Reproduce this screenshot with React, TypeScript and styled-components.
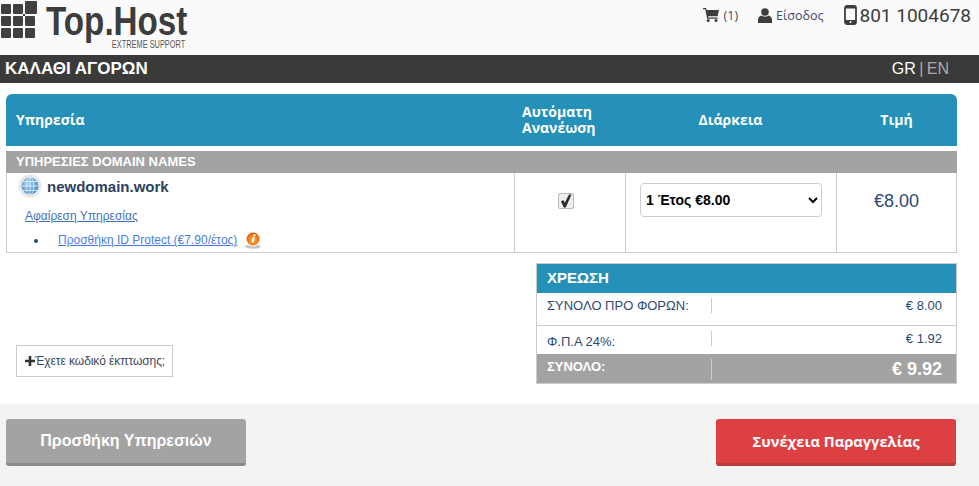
import React from "react";
import styled, { createGlobalStyle } from "styled-components";

const GlobalStyle = createGlobalStyle`
  html, body { margin: 0; padding: 0; background: #fff; }
  body { font-family: "Liberation Sans", Arial, sans-serif; color: #2c4a6b; }
  * { box-sizing: border-box; }
`;

const Page = styled.div`
  width: 979px;
  height: 486px;
  overflow: hidden;
  display: flex;
  flex-direction: column;
`;

const TopBar = styled.header`
  height: 55px;
  background: #fafafa;
  display: flex;
  justify-content: space-between;
  padding-right: 8px;
`;

const Logo = styled.div`
  display: flex;
  align-items: flex-start;
  gap: 8px;
  padding-top: 1px;
`;

const LogoText = styled.div`
  width: 139px;
  display: flex;
  flex-direction: column;
  align-items: flex-end;
  color: #3d3d3d;
`;

const LogoName = styled.span`
  align-self: flex-start;
  font-size: 40px;
  font-weight: 700;
  line-height: 40px;
  white-space: nowrap;
  transform: scaleX(0.83);
  transform-origin: left center;
`;

const LogoTag = styled.span`
  font-size: 10px;
  line-height: 8px;
  white-space: nowrap;
  color: #555;
  transform: scaleX(0.74);
  transform-origin: right center;
`;

const TopLinks = styled.div`
  display: flex;
  align-items: flex-start;
  padding-top: 5px;
`;

const TopLink = styled.span<{ $gap: number }>`
  display: flex;
  align-items: center;
  gap: ${(p) => p.$gap}px;
  height: 20px;
  margin-right: 20px;
  font-family: "Open Sans", sans-serif;
  font-size: 12.5px;
  color: #3d4a63;
`;

const Phone = styled.span`
  display: flex;
  align-items: center;
  gap: 3px;
  height: 20px;
  font-family: Roboto, sans-serif;
  font-size: 19px;
  color: #3d3d3d;
`;

const TitleBar = styled.div`
  height: 28px;
  background: #3a3a3a;
  display: flex;
  align-items: center;
  justify-content: space-between;
  padding: 0 30px 0 5px;
  color: #fff;
`;

const Title = styled.h1`
  margin: 0;
  font-size: 17px;
  font-weight: 700;
`;

const Langs = styled.div`
  font-size: 16px;
  word-spacing: -1px;
  color: #fff;
  span { color: #aaa; }
`;

const Content = styled.main`
  flex: 1;
  background: #fff;
  padding: 11px 22px 0 6px;
  display: flex;
  flex-direction: column;
`;

const HeadRow = styled.div`
  height: 52px;
  display: grid;
  grid-template-columns: 508px 111px 211px 121px;
  background: #2591b9;
  border-radius: 6px 6px 0 0;
  color: #fff;
  font-family: "Open Sans", sans-serif;
  font-size: 14px;
  font-weight: 700;
  line-height: 16px;
`;

const HeadCell = styled.div<{ $inset?: number }>`
  display: flex;
  align-items: center;
  justify-content: ${(p) => (p.$inset ? "flex-start" : "center")};
  padding-left: ${(p) => p.$inset ?? 0}px;
`;

const SectionRow = styled.div`
  height: 22px;
  margin-top: 5px;
  background: #a3a3a3;
  color: #fff;
  font-size: 13px;
  font-weight: 700;
  line-height: 21px;
  padding-left: 10px;
`;

const BodyRow = styled.div`
  height: 80px;
  display: grid;
  grid-template-columns: 507px 111px 211px 120px;
  border: 1px solid #ccc;
  border-top: 0;
  margin-bottom: 10px;
`;

const Cell = styled.div`
  border-left: 1px solid #ccc;
  display: flex;
  justify-content: center;
`;

const ServiceCell = styled.div`
  padding: 1px 0 0 11px;
`;

const DomainLine = styled.div`
  display: flex;
  align-items: center;
  gap: 5px;
  font-size: 15px;
  font-weight: 700;
  color: #2d3f5e;
`;

const RemoveLink = styled.a`
  display: block;
  margin: 11px 0 0 7px;
  font-size: 12px;
  line-height: 14px;
  color: #3f74b8;
  text-decoration: underline;
`;

const AddonList = styled.ul`
  margin: 8px 0 0;
  padding: 0 0 0 30px;
  font-size: 12px;
  line-height: 14px;
  color: #2d4a73;
`;

const AddonItem = styled.li`
  padding-left: 10px;
`;

const AddonInner = styled.span`
  display: inline-flex;
  align-items: center;
  gap: 7px;
`;

const AddonLink = styled.a`
  color: #4a7ee0;
  text-decoration: underline;
`;

const CheckBox = styled.span`
  width: 16px;
  height: 16px;
  margin: 20px 8px 0 0;
  border: 1px solid #bbb;
  border-radius: 2px;
  background: #eee;
  display: flex;
  align-items: center;
  justify-content: center;
`;

const DurationSelect = styled.select`
  width: 182px;
  height: 34px;
  margin-top: 10px;
  padding: 0 1px;
  border: 1px solid #ccc;
  border-radius: 4px;
  background: #fff;
  color: #000;
  font-family: "Liberation Sans", sans-serif;
  font-size: 14px;
  font-weight: 700;
`;

const Price = styled.div`
  margin-top: 18px;
  font-size: 18px;
  line-height: 20px;
  color: #2d4a73;
`;

const Lower = styled.div`
  display: flex;
  justify-content: space-between;
  align-items: flex-start;
`;

const CouponButton = styled.button`
  display: flex;
  align-items: center;
  width: 157px;
  height: 32px;
  margin: 82px 0 0 10px;
  padding: 0 0 0 8px;
  border: 1px solid #ccc;
  background: #fff;
  font-family: "Liberation Sans", sans-serif;
  font-size: 12px;
  letter-spacing: -0.07px;
  color: #3a4658;
  white-space: nowrap;
`;

const Summary = styled.section`
  width: 421px;
  height: 121px;
  border: 1px solid #ccc;
  display: flex;
  flex-direction: column;
`;

const SummaryTitle = styled.div`
  height: 29px;
  background: #2591b9;
  color: #fff;
  font-size: 15px;
  font-weight: 700;
  line-height: 28px;
  padding-left: 10px;
`;

const SummaryRow = styled.div<{ $total?: boolean; $h: number; $last?: boolean }>`
  height: ${(p) => p.$h}px;
  display: grid;
  grid-template-columns: 174px 1fr;
  padding-top: 5px;
  background: ${(p) => (p.$total ? "#a3a3a3" : "#fff")};
  color: ${(p) => (p.$total ? "#fff" : "#2d4a73")};
  border-bottom: ${(p) => (p.$last ? "0" : "1px solid #ccc")};
`;

const SummaryLabel = styled.div<{ $total?: boolean; $shift?: number }>`
  padding: ${(p) => p.$shift ?? 0}px 0 0 10px;
  font-size: 13px;
  font-weight: ${(p) => (p.$total ? 700 : 400)};
  line-height: 15px;
`;

const SummaryValue = styled.div<{ $total?: boolean }>`
  height: ${(p) => (p.$total ? "21px" : "15px")};
  border-left: 1px solid #ccc;
  text-align: right;
  padding-right: 14px;
  font-size: ${(p) => (p.$total ? "18px" : "13px")};
  font-weight: ${(p) => (p.$total ? 700 : 400)};
  line-height: ${(p) => (p.$total ? "21px" : "15px")};
`;

const Footer = styled.footer`
  height: 82px;
  background: #f3f3f3;
  display: flex;
  justify-content: space-between;
  padding: 15px 23px 0 6px;
`;

const ActionButton = styled.button<{ $red?: boolean }>`
  width: 240px;
  height: 47px;
  border: 0;
  border-bottom: 3px solid ${(p) => (p.$red ? "#b93a3c" : "#8a8a8a")};
  border-radius: 3px;
  background: ${(p) => (p.$red ? "#dc4043" : "#a3a3a3")};
  color: #fff;
  font-family: ${(p) => (p.$red ? '"Open Sans"' : '"Liberation Sans"')}, sans-serif;
  font-size: ${(p) => (p.$red ? "14.7px" : "16px")};
  font-weight: 700;
`;

const LogoMark = () => (
  <svg width="38" height="38" viewBox="0 0 38 38" fill="#404040">
    <rect x="1" y="3" width="10" height="10" rx="1" />
    <rect x="13" y="3" width="10" height="10" rx="1" />
    <rect x="25" y="0" width="12" height="13" rx="1" />
    <rect x="1" y="15" width="10" height="10" rx="1" />
    <rect x="13" y="15" width="10" height="10" rx="1" />
    <rect x="25" y="15" width="10" height="10" rx="1" />
    <rect x="1" y="27" width="10" height="10" rx="1" />
    <rect x="13" y="27" width="10" height="10" rx="1" />
    <rect x="25" y="27" width="10" height="10" rx="1" />
    <rect x="23" y="13" width="2" height="2" />
  </svg>
);

const CartIcon = () => (
  <svg width="16" height="14" viewBox="0 0 16 14" fill="#3d3d3d">
    <path d="M0 0h3l.5 2H16l-1.4 6.2H5l.3 1.3h9.3v1.200H4.200L2.200 1.200H0z" />
    <circle cx="5.2" cy="12.5" r="1.5" />
    <circle cx="13" cy="12.5" r="1.5" />
  </svg>
);

const UserIcon = () => (
  <svg width="14" height="15" viewBox="0 0 14 15" fill="#3d3d3d">
    <circle cx="7" cy="4" r="3.8" />
    <path d="M0 15v-3.2C0 9.2 2 7.8 3.6 7.4c1 .8 2.1 1.2 3.4 1.2s2.4-.4 3.4-1.2C12 7.8 14 9.2 14 11.8V15z" />
  </svg>
);

const PhoneIcon = () => (
  <svg width="13" height="20" viewBox="0 0 13 20" fill="none">
    <rect x="1" y="1" width="11" height="18" rx="2" stroke="#3d3d3d" strokeWidth="1.8" />
    <rect x="1" y="15" width="11" height="4" rx="1" fill="#3d3d3d" />
    <rect x="1" y="1" width="11" height="2.5" fill="#3d3d3d" />
    <circle cx="6.5" cy="17" r="1" fill="#fff" />
  </svg>
);

const GlobeIcon = () => (
  <svg width="24" height="24" viewBox="0 0 24 24" fill="none">
    <defs>
      <radialGradient id="globeFill" cx="0.4" cy="0.35" r="0.7">
        <stop offset="0" stopColor="#a8d0ee" />
        <stop offset="1" stopColor="#3f86c4" />
      </radialGradient>
    </defs>
    <circle cx="12" cy="12" r="11.5" fill="#e8e8e8" />
    <circle cx="12" cy="12" r="8.5" fill="url(#globeFill)" />
    <g stroke="#e6f2fb" strokeWidth="0.8">
      <ellipse cx="12" cy="12" rx="4" ry="8.5" />
      <path d="M12 3.500v17M3.500 12h17M5 7.500h14M5 16.500h14" />
    </g>
  </svg>
);

const InfoIcon = () => (
  <svg width="18" height="18" viewBox="0 0 18 18">
    <defs>
      <radialGradient id="infoFill" cx="0.5" cy="0.6" r="0.6">
        <stop offset="0" stopColor="#fdb33c" />
        <stop offset="1" stopColor="#e8560c" />
      </radialGradient>
    </defs>
    <ellipse cx="9" cy="15.5" rx="8" ry="2.2" fill="#c4c4c4" />
    <circle cx="9" cy="8" r="7.5" fill="#fff" />
    <circle cx="9" cy="8" r="6.5" fill="url(#infoFill)" />
    <path d="M9.500 3.500h2.200l-.5 1.800H9zM8.700 6.300h2.200l-1.300 5.200H7.400z" fill="#fff" />
  </svg>
);

const CheckIcon = () => (
  <svg width="12" height="14" viewBox="0 0 12 14" fill="#2b2b2b">
    <path d="M1 7.500l2.200-1.500 1.600 2.800L9 .5h2.500L5.800 13.500H3.800z" />
  </svg>
);

const PlusIcon = () => (
  <svg width="10" height="10" viewBox="0 0 10 10" fill="#333">
    <path d="M3.700 0h2.600v3.700H10v2.600H6.300V10H3.700V6.300H0V3.700h3.700z" />
  </svg>
);

export default function App() {
  return (
    <Page>
      <GlobalStyle />
      <TopBar>
        <Logo>
          <LogoMark />
          <LogoText>
            <LogoName>Top.Host</LogoName>
            <LogoTag>EXTREME SUPPORT</LogoTag>
          </LogoText>
        </Logo>
        <TopLinks>
          <TopLink $gap={5}>
            <CartIcon />
            (1)
          </TopLink>
          <TopLink $gap={4}>
            <UserIcon />
            Είσοδος
          </TopLink>
          <Phone>
            <PhoneIcon />
            801 1004678
          </Phone>
        </TopLinks>
      </TopBar>

      <TitleBar>
        <Title>ΚΑΛΑΘΙ ΑΓΟΡΩΝ</Title>
        <Langs>
          GR<span> | EN</span>
        </Langs>
      </TitleBar>

      <Content>
        <HeadRow>
          <HeadCell $inset={10}>Υπηρεσία</HeadCell>
          <HeadCell $inset={8}>
            Αυτόματη
            <br />
            Ανανέωση
          </HeadCell>
          <HeadCell>Διάρκεια</HeadCell>
          <HeadCell>Τιμή</HeadCell>
        </HeadRow>
        <SectionRow>ΥΠΗΡΕΣΙΕΣ DOMAIN NAMES</SectionRow>
        <BodyRow>
          <ServiceCell>
            <DomainLine>
              <GlobeIcon />
              newdomain.work
            </DomainLine>
            <RemoveLink>Αφαίρεση Υπηρεσίας</RemoveLink>
            <AddonList>
              <AddonItem>
                <AddonInner>
                  <AddonLink>Προσθήκη ID Protect (€7.90/έτος)</AddonLink>
                  <InfoIcon />
                </AddonInner>
              </AddonItem>
            </AddonList>
          </ServiceCell>
          <Cell>
            <CheckBox>
              <CheckIcon />
            </CheckBox>
          </Cell>
          <Cell>
            <DurationSelect defaultValue="1">
              <option value="1">1 Έτος €8.00</option>
              <option value="2">2 Έτη €16.00</option>
            </DurationSelect>
          </Cell>
          <Cell>
            <Price>€8.00</Price>
          </Cell>
        </BodyRow>

        <Lower>
          <CouponButton>
            <PlusIcon />
            Έχετε κωδικό έκπτωσης;
          </CouponButton>
          <Summary>
            <SummaryTitle>ΧΡΕΩΣΗ</SummaryTitle>
            <SummaryRow $h={33}>
              <SummaryLabel>ΣΥΝΟΛΟ ΠΡΟ ΦΟΡΩΝ:</SummaryLabel>
              <SummaryValue>€ 8.00</SummaryValue>
            </SummaryRow>
            <SummaryRow $h={28} $last>
              <SummaryLabel $shift={3}>Φ.Π.Α 24%:</SummaryLabel>
              <SummaryValue>€ 1.92</SummaryValue>
            </SummaryRow>
            <SummaryRow $h={29} $total $last>
              <SummaryLabel $total>ΣΥΝΟΛΟ:</SummaryLabel>
              <SummaryValue $total>€ 9.92</SummaryValue>
            </SummaryRow>
          </Summary>
        </Lower>
      </Content>

      <Footer>
        <ActionButton>Προσθήκη Υπηρεσιών</ActionButton>
        <ActionButton $red>Συνέχεια Παραγγελίας</ActionButton>
      </Footer>
    </Page>
  );
}
